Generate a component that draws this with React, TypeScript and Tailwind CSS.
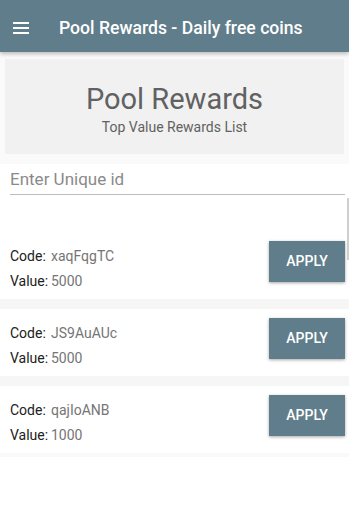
import React from "react";

type Reward = {
  code: string;
  value: number;
};

const rewards: Reward[] = [
  { code: "xaqFqgTC", value: 5000 },
  { code: "JS9AuAUc", value: 5000 },
  { code: "qajIoANB", value: 1000 },
];

function MenuIcon() {
  return (
    <svg width="16" height="12" viewBox="0 0 16 12" fill="#ffffff">
      <rect x="0" y="0" width="16" height="2" />
      <rect x="0" y="5" width="16" height="2" />
      <rect x="0" y="10" width="16" height="2" />
    </svg>
  );
}

function RewardRow({ reward }: { reward: Reward }) {
  return (
    <div className="flex h-[67px] items-start justify-between bg-white">
      <div className="flex flex-col pl-[10px] pt-[14px] text-[14px] leading-[20px]">
        <div className="flex">
          <span className="w-[41px] text-[#212121]">Code:</span>
          <span className="text-[#757575]">{reward.code}</span>
        </div>
        <div className="mt-[5px] flex">
          <span className="w-[41px] text-[#212121]">Value:</span>
          <span className="text-[#757575]">{reward.value}</span>
        </div>
      </div>
      <button className="mr-[4px] mt-[9px] flex h-[41px] w-[76px] items-center justify-center bg-[#607d8b] text-[14px] font-medium text-white shadow-[0_1px_3px_rgba(0,0,0,0.35)]">
        APPLY
      </button>
    </div>
  );
}

export default function App() {
  return (
    <div className="relative h-[512px] w-[349px] overflow-hidden bg-white font-['Roboto',sans-serif]">
      <div className="relative z-10 flex h-[52px] items-center bg-[#607d8b] pt-[4px] shadow-[0_2px_4px_rgba(0,0,0,0.25)]">
        <div className="ml-[13px] flex items-center">
          <MenuIcon />
        </div>
        <h1 className="ml-[30px] text-[17.6px] font-medium text-white">Pool Rewards - Daily free coins</h1>
      </div>

      <div className="bg-[#fafafa] px-[5px] pb-[10px] pt-[7px]">
        <div className="flex h-[95px] flex-col items-center justify-center bg-[#f1f1f1] pt-[4px]">
          <p className="text-[29px] leading-[34px] text-[#616161]">Pool Rewards</p>
          <p className="mt-[2px] text-[14px] leading-[18px] text-[#616161]">Top Value Rewards List</p>
        </div>
      </div>

      <div className="bg-white pl-[10px] pr-[4px] pt-[3px]">
        <div className="flex h-[28px] items-end border-b-[1.5px] border-[#bdbdbd] pb-[2px] text-[17px] text-[#8a8a8a]">
          Enter Unique id
        </div>
      </div>

      <div className="pt-[37px]">
        {rewards.map((r, i) => (
          <div key={r.code}>
            <RewardRow reward={r} />
            <div className={i === rewards.length - 1 ? "h-[4px] bg-[#f9f9f9]" : "h-[10px] bg-[#f6f6f6]"} />
          </div>
        ))}
      </div>

      <div className="absolute right-0 top-[198px] h-[62px] w-[2px] bg-[#cfcfcf]" />
    </div>
  );
}
